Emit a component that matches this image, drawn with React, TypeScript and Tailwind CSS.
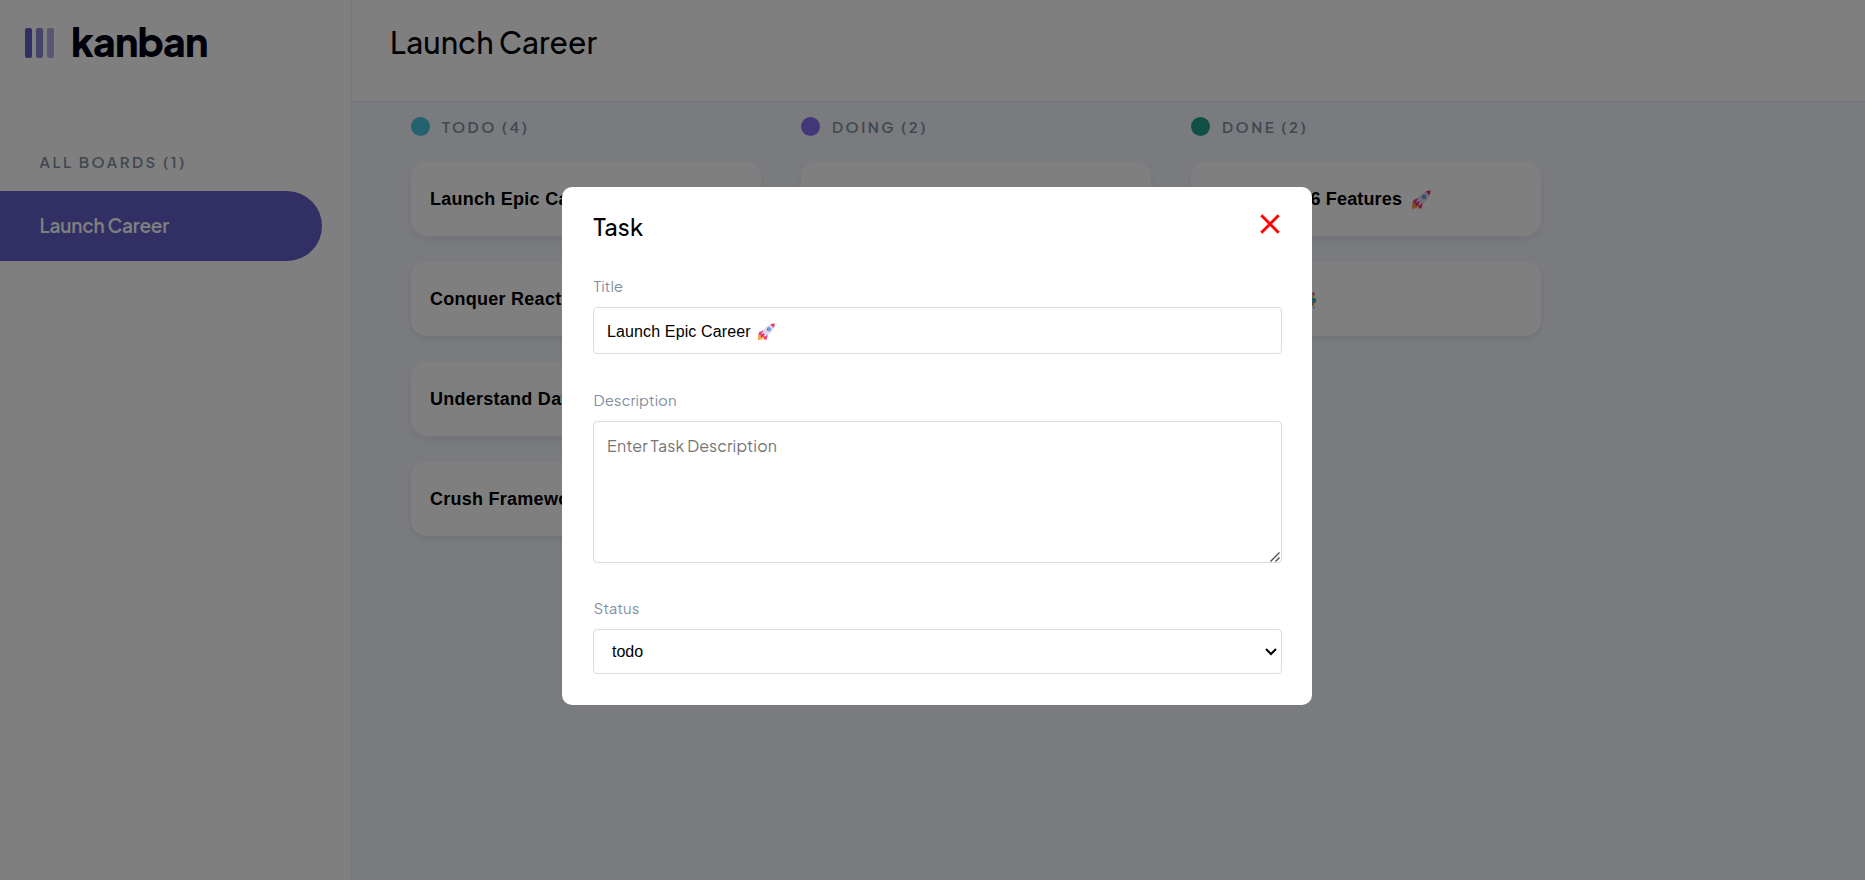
import React from "react";

function Rocket({ className }: { className: string }) {
  return (
    <svg viewBox="0 0 20 20" className={className} aria-label="rocket">
      <path d="M1 14.2 5 12.8 7.2 15 5.6 18.6 3.6 18.2 1 19.2Z" fill="#f9a03f" />
      <path d="M2.6 10 7.6 7.8 9.4 10.4 5.6 13.6 1.2 13.6ZM10.6 18.6 12.2 12.6 9.8 11 6.6 14.8 8 18.4Z" fill="#f8397f" />
      <path d="M5.2 12.4C6.8 7.2 10.8 3 16 1.2L18.9 4.2C17.2 9.6 13 13.6 8 15.1Z" fill="#ddd6ea" />
      <path d="M14.8 1.6C16.2 .9 17.8.5 19.6.6 19.7 2.4 19.3 3.9 18.5 5.3Z" fill="#f8315f" />
      <circle cx="13.1" cy="6.9" r="2.1" fill="#4a80d6" />
      <circle cx="13.1" cy="6.9" r="1.2" fill="#74b4f0" />
      <path d="M4.6 15.4 8 12" stroke="#ca0b4a" strokeWidth="1.6" />
    </svg>
  );
}

function Pinata() {
  return (
    <svg viewBox="0 0 20 20" className="h-5 w-5" aria-label="party">
      <path d="M3 6h12v9H3z" fill="#f8c312" />
      <path d="M15.5 2.5h2v3h-2z" fill="#e8318f" />
      <path d="M14 5.5h2.6v2.5H14z" fill="#e9c23c" />
      <path d="M13 8h5l1.6 2.2L18.2 13H13z" fill="#4ea9c4" />
      <path d="M14 13h3.6l-1 3H14z" fill="#e9a03f" />
      <path d="M16.6 17h1.2v1.2h-1.2z" fill="#1c7fd0" />
    </svg>
  );
}

type Task = { title: string; icon?: "rocket" | "party" };

const columns: { name: string; dot: string; tracking: string; tasks: Task[] }[] = [
  {
    name: "TODO",
    dot: "bg-[#49c4e5]",
    tracking: "tracking-[0.26px]",
    tasks: [
      { title: "Launch Epic Career", icon: "rocket" },
      { title: "Conquer React" },
      { title: "Understand Data" },
      { title: "Crush Frameworks" },
    ],
  },
  { name: "DOING", dot: "bg-[#8471f2]", tracking: "", tasks: [{ title: "" }, { title: "" }] },
  {
    name: "DONE",
    dot: "bg-[#219f8d]",
    tracking: "tracking-[0.15px]",
    tasks: [
      { title: "Unleash ES6 Features", icon: "rocket" },
      { title: "Celebrate", icon: "party" },
    ],
  },
];

const arial = "font-['Liberation_Sans',Arial,sans-serif]";

function Sidebar() {
  return (
    <aside className="flex w-[352px] shrink-0 flex-col border-r border-[#e4ebfa] bg-white">
      <div className="flex h-[86px] items-center pl-[25px]">
        <div className="flex gap-[4px]">
          <span className="h-[30px] w-[7px] rounded-[2px] bg-[#635fc7]" />
          <span className="h-[30px] w-[7px] rounded-[2px] bg-[#635fc7]/75" />
          <span className="h-[30px] w-[7px] rounded-[2px] bg-[#635fc7]/50" />
        </div>
        <span className="-mt-[4px] ml-[17px] text-[39px] leading-none font-extrabold tracking-[-0.8px] text-[#000112]">kanban</span>
      </div>
      <h2 className="mt-[64px] pl-[39.5px] text-[15px] leading-[24px] font-semibold tracking-[2.5px] text-[#828fa3]">
        ALL BOARDS (1)
      </h2>
      <div className="mt-[17px] flex h-[70px] w-[322px] items-center rounded-r-full bg-[#635fc7] pb-[1px] pl-[39.5px] text-[19px] font-semibold tracking-[-0.2px] text-white">
        Launch Career
      </div>
    </aside>
  );
}

function Board() {
  return (
    <main className="flex flex-1 flex-col bg-[#f4f7fd]">
      <header className="h-[102px] border-b border-[#e4ebfa] bg-white pt-[21px] pl-[38px]">
        <h1 className="text-[30px] leading-[42px] font-[550] text-black">Launch Career</h1>
      </header>
      <div className="flex gap-[40px] pt-[15px] pl-[59px]">
        {columns.map((c) => (
          <section key={c.name} className="w-[350px]">
            <div className="flex h-[19px] items-center">
              <span className={`h-[19px] w-[19px] rounded-full ${c.dot}`} />
              <span className="mt-[2px] ml-[12px] text-[15px] font-semibold tracking-[2.45px] text-[#828fa3]">
                {c.name} ({c.tasks.length})
              </span>
            </div>
            <div className="mt-[25px] flex flex-col gap-[25px]">
              {c.tasks.map((t, i) => (
                <div
                  key={i}
                  className={`flex h-[75px] items-center rounded-[16px] bg-white pt-[2px] pl-[19px] text-[18px] font-bold text-black shadow-[0_4px_6px_rgba(54,78,126,0.1)] ${c.tracking} ${arial}`}
                >
                  <span>{t.title}</span>
                  {t.icon === "rocket" && <Rocket className="ml-[9px] h-5 w-5" />}
                  {t.icon === "party" && <span className="ml-[4px]"><Pinata /></span>}
                </div>
              ))}
            </div>
          </section>
        ))}
      </div>
    </main>
  );
}

function TaskModal() {
  const label = "pl-[0.5px] text-[15px] leading-[20px] text-[#828fa3]";
  return (
    <div className="fixed inset-0 flex items-start justify-center bg-black/50 pt-[187px] pl-[9px]">
      <div className="flex h-[518px] w-[750px] flex-col rounded-[10px] bg-white pr-[30px] pl-[31px]">
        <div className="flex items-start justify-between pt-[23px]">
          <h2 className="pl-[0.5px] text-[23.5px] leading-[34px] font-[550] text-black">Task</h2>
          <svg viewBox="0 0 20 20" className="mt-[4px] mr-[2px] h-[20px] w-[20px]" aria-label="close">
            <path d="M1.3 1.3 18.7 18.7M18.7 1.3 1.3 18.7" stroke="#ff0000" strokeWidth="2.9" />
          </svg>
        </div>
        <label className={`mt-[32px] ${label}`}>Title</label>
        <div className={`mt-[11px] flex h-[47px] items-center rounded-[4px] border border-[#dcdcdc] pt-[2px] pl-[13px] text-[16px] tracking-[0.13px] text-black ${arial}`}>
          <span>Launch Epic Career</span>
          <Rocket className="ml-[6px] h-[18px] w-[18px]" />
        </div>
        <label className={`mt-[36px] ${label}`}>Description</label>
        <div className="relative mt-[11px] h-[142px] shrink-0">
          <textarea
            className="block h-full w-full resize-none rounded-[4px] border border-[#dcdcdc] px-[13px] py-[12px] text-[16px] leading-[24px] tracking-[0.12px] placeholder:text-[#757575]"
            placeholder="Enter Task Description"
          />
          <svg viewBox="0 0 10 10" className="absolute right-[2px] bottom-[1px] h-[10px] w-[10px]" fill="none" stroke="#505050" strokeWidth="1.4">
            <path d="M.5 9.5 9.5 .5M5.5 9.5 9.5 5.5" />
          </svg>
        </div>
        <label className={`mt-[35px] ${label}`}>Status</label>
        <div className="relative mt-[11px]">
          <select
            defaultValue="todo"
            className={`block h-[45px] w-full appearance-none rounded-[4px] border border-[#dcdcdc] bg-white pl-[18px] text-[16px] text-black ${arial}`}
          >
            <option>todo</option>
            <option>doing</option>
            <option>done</option>
          </select>
          <svg viewBox="0 0 12 8" className="absolute top-[19px] right-[5px] h-[8px] w-[12px]" fill="none" stroke="#000000" strokeWidth="2">
            <path d="M1 1 6 6 11 1" />
          </svg>
        </div>
      </div>
    </div>
  );
}

export default function App() {
  return (
    <div className="flex h-screen w-full overflow-hidden font-['Plus_Jakarta_Sans',Inter,sans-serif]">
      <Sidebar />
      <Board />
      <TaskModal />
    </div>
  );
}
